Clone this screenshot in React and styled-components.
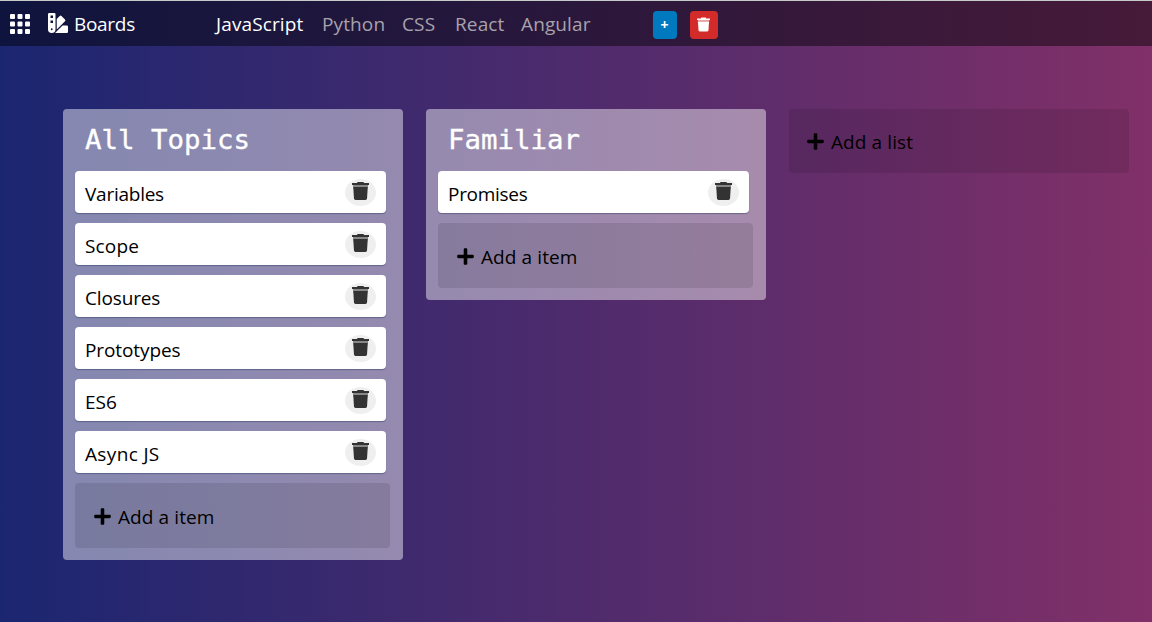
import React from "react";
import styled, { createGlobalStyle } from "styled-components";
import { FaPlus, FaSwatchbook } from "react-icons/fa";

const GlobalStyle = createGlobalStyle`
  * { box-sizing: border-box; }
  body {
    margin: 0;
    font-family: "Open Sans", "Noto Sans", sans-serif;
    font-size: 19px;
    color: #000;
  }
`;

const Page = styled.div`
  height: 622px;
  overflow: hidden;
  border-top: 1px solid #c6cbc9;
  background: linear-gradient(to right, #1b2671, #813068);
`;

const Navbar = styled.header`
  display: flex;
  align-items: center;
  height: 45px;
  padding: 2px 10px 0;
  background: rgba(0, 0, 0, 0.45);
`;

const AppsIcon = styled.svg`
  width: 20px;
  height: 20px;
  margin-top: -2px;
  fill: #fff;
`;

const Brand = styled.div`
  display: flex;
  align-items: center;
  gap: 6px;
  width: 168px;
  margin: -2px 0 0 18px;
  color: #fff;
  letter-spacing: -0.3px;
  svg { width: 20px; height: 20px; margin-top: -2px; }
`;

const Tabs = styled.nav`
  display: flex;
  gap: 18px;
  width: 437px;
  margin-top: -2px;
`;

const Tab = styled.a`
  width: ${(p) => p.$w}px;
  white-space: nowrap;
  letter-spacing: 0.12px;
  color: ${(p) => (p.$active ? "#fff" : "#a8a2ab")};
`;

const NavButton = styled.button`
  display: flex;
  align-items: center;
  justify-content: center;
  width: ${(p) => p.$w}px;
  height: 28px;
  margin-right: 13px;
  padding: 0 1px 0 0;
  border: 0;
  border-radius: 4px;
  color: #fff;
  font: 700 14px "Open Sans", sans-serif;
  background: ${(p) => p.$color};
`;

const Board = styled.main`
  display: flex;
  align-items: flex-start;
  gap: 23px;
  padding: 63px 0 0 63px;
`;

const List = styled.section`
  width: 340px;
  padding: 12px;
  border-radius: 4px;
  background: rgba(255, 255, 255, 0.45);
`;

const ListTitle = styled.h2`
  height: 50px;
  margin: 0;
  padding-left: 10px;
  font: 400 27.4px/37px "DejaVu Sans Mono", monospace;
  -webkit-text-stroke: 0.35px #fff;
  color: #fff;
`;

const Card = styled.div`
  display: flex;
  align-items: center;
  justify-content: space-between;
  width: 311px;
  height: 42px;
  margin-bottom: 10px;
  padding: 0 10px;
  border-radius: 4px;
  background: #fff;
  box-shadow: 0 1px 1px rgba(9, 30, 66, 0.35);
`;

const CardText = styled.span`
  padding-top: 3px;
  letter-spacing: ${(p) => p.$track}px;
`;

const DeleteButton = styled.button`
  display: flex;
  justify-content: center;
  width: 31px;
  height: 27px;
  padding: 3px 0 0;
  border: 0;
  border-radius: 50%;
  background: #efefef;
  color: #333;
`;

const AddBox = styled.div`
  display: flex;
  align-items: center;
  gap: 6px;
  width: ${(p) => p.$w}px;
  height: ${(p) => p.$h}px;
  padding: ${(p) => p.$top}px 0 0 ${(p) => p.$pad}px;
  border-radius: 4px;
  background: rgba(0, 0, 0, 0.1);
  letter-spacing: 0.1px;
  svg { margin-top: -2px; }
`;

const TrashIcon = ({ width, height }) => (
  <svg width={width} height={height} viewBox="0 0 17 18" fill="currentColor">
    <path d="M5.5 0H11.5L12 1H17V3H0V1H5Z" />
    <path d="M1 3H16V5H1Z" opacity="0.55" />
    <path d="M1.2 5H15.8L15 16.6Q14.9 18 13.5 18H3.5Q2.1 18 2 16.6Z" />
  </svg>
);

const TABS = [["JavaScript", 88], ["Python", 62], ["CSS", 35], ["React", 48], ["Angular", 70]];
const LISTS = [
  {
    title: "All Topics",
    items: [
      ["Variables", -0.25],
      ["Scope", 0.15],
      ["Closures", -0.15],
      ["Prototypes", -0.1],
      ["ES6", 0],
      ["Async JS", 0.35],
    ],
  },
  { title: "Familiar", items: [["Promises", -0.3]] },
];

export default function App() {
  return (
    <Page>
      <GlobalStyle />
      <Navbar>
        <AppsIcon viewBox="0 0 20 20">
          {[0, 7.5, 15].map((y) => [0, 7.5, 15].map((x) => (
            <rect key={`${x}-${y}`} x={x} y={y} width="5" height="5" rx="1" />
          )))}
        </AppsIcon>
        <Brand><FaSwatchbook />Boards</Brand>
        <Tabs>
          {TABS.map(([name, w], i) => <Tab key={name} $w={w} $active={i === 0}>{name}</Tab>)}
        </Tabs>
        <NavButton $w={24} $color="#0079bf">+</NavButton>
        <NavButton $w={28} $color="#d32a2a"><TrashIcon width={13} height={15} /></NavButton>
      </Navbar>
      <Board>
        {LISTS.map((list) => (
          <List key={list.title}>
            <ListTitle>{list.title}</ListTitle>
            {list.items.map(([item, track]) => (
              <Card key={item}>
                <CardText $track={track}>{item}</CardText>
                <DeleteButton aria-label="Delete"><TrashIcon width={17} height={18} /></DeleteButton>
              </Card>
            ))}
            <AddBox $w={315} $h={65} $pad={18} $top={3}><FaPlus size={19} />Add a item</AddBox>
          </List>
        ))}
        <AddBox $w={340} $h={64} $pad={17} $top={2}><FaPlus size={19} />Add a list</AddBox>
      </Board>
    </Page>
  );
}
